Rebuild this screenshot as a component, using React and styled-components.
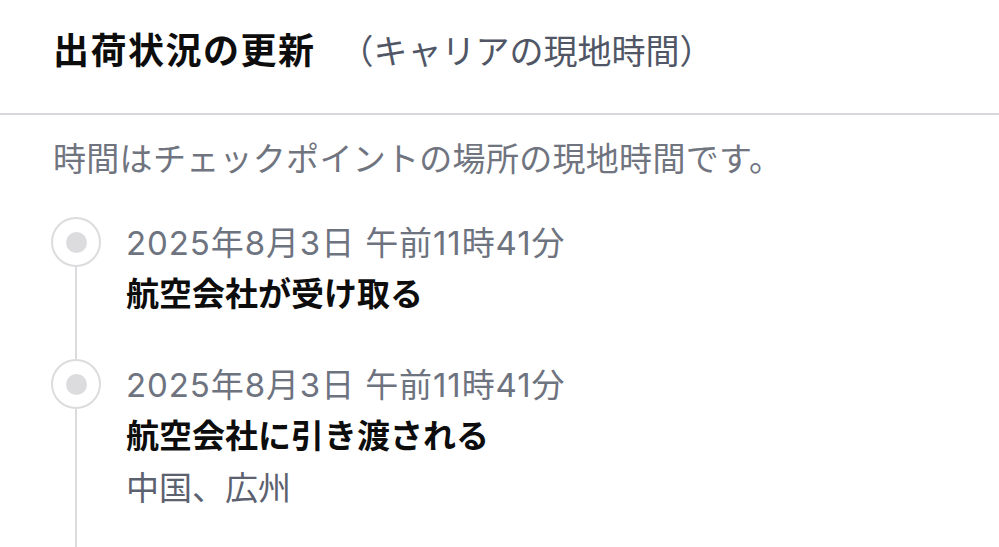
import React from 'react';
import styled, { createGlobalStyle } from 'styled-components';

const GlobalStyle = createGlobalStyle`
  html, body {
    margin: 0;
    padding: 0;
    background: #ffffff;
  }
  body {
    font-family: "Liberation Sans", "Noto Sans CJK JP", sans-serif;
    color: #111111;
    overflow: hidden;
  }
`;

const Page = styled.div`
  width: 999px;
  height: 547px;
  overflow: hidden;
`;

const Header = styled.div`
  display: flex;
  align-items: baseline;
  padding: 26px 0 35px 53px;
  border-bottom: 2px solid #d7d8dd;
  line-height: 52px;
`;

const Title = styled.h1`
  margin: 0;
  font-size: 36px;
  font-weight: 700;
  color: #0d0d0d;
  letter-spacing: 1.5px;
`;

const Subtitle = styled.span`
  margin-left: 24px;
  font-size: 34px;
  color: #505666;
`;

const Body = styled.div`
  padding: 19px 0 0 53px;
`;

const Note = styled.p`
  margin: 0 0 31px;
  font-size: 33px;
  line-height: 52px;
  color: #70747f;
  letter-spacing: 0.3px;
`;

const Timeline = styled.ul`
  list-style: none;
  margin: 0;
  padding: 0;
`;

const Item = styled.li`
  display: grid;
  grid-template-columns: 50px 1fr;
  column-gap: 25px;
  margin-left: -2px;
`;

const Rail = styled.div`
  display: flex;
  flex-direction: column;
  align-items: center;
`;

const Dot = styled.div`
  flex: none;
  width: 50px;
  height: 50px;
  box-sizing: border-box;
  border: 2px solid #dcdcdf;
  border-radius: 50%;
  display: flex;
  align-items: center;
  justify-content: center;

  &::after {
    content: '';
    width: 21px;
    height: 21px;
    border-radius: 50%;
    background: #dcdcdf;
  }
`;

const Line = styled.div`
  flex: 1;
  width: 2px;
  background: #dcdcdf;
`;

const Content = styled.div`
  padding-bottom: ${(p) => (p.$last ? 60 : 38)}px;
  font-size: 33px;
  line-height: 52px;
`;

const Time = styled.div`
  font-family: "Inter", "Noto Sans CJK JP", sans-serif;
  color: #6e7380;
  letter-spacing: 0.9px;
`;

const Event = styled.div`
  font-weight: 700;
  color: #0d0d0d;
`;

const Place = styled.div`
  color: #5c6170;
`;

const events = [
  { id: 1, time: '2025年8月3日 午前11時41分', title: '航空会社が受け取る' },
  { id: 2, time: '2025年8月3日 午前11時41分', title: '航空会社に引き渡される', place: '中国、広州' },
];

const App = () => {
  return (
    <Page>
      <GlobalStyle />
      <Header>
        <Title>出荷状況の更新</Title>
        <Subtitle>（キャリアの現地時間）</Subtitle>
      </Header>
      <Body>
        <Note>時間はチェックポイントの場所の現地時間です。</Note>
        <Timeline>
          {events.map((e, i) => (
            <Item key={e.id}>
              <Rail>
                <Dot />
                <Line />
              </Rail>
              <Content $last={i === events.length - 1}>
                <Time>{e.time}</Time>
                <Event>{e.title}</Event>
                {e.place && <Place>{e.place}</Place>}
              </Content>
            </Item>
          ))}
        </Timeline>
      </Body>
    </Page>
  );
};

export default App;
